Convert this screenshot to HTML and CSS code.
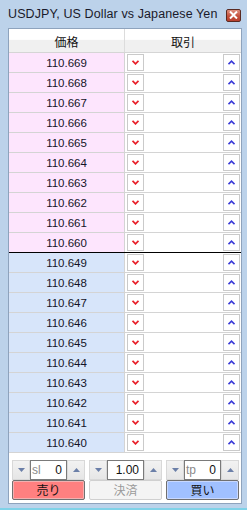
FILE: index.html
```html
<!DOCTYPE html>
<html>
<head>
<meta charset="utf-8">
<link rel="stylesheet" href="styles.css">
</head>
<body>
<div class="window">
  <div class="titlebar">
    <span class="title">USDJPY, US Dollar vs Japanese Yen</span>
    <span class="close"><svg width="9" height="8" viewBox="0 0 9 8"><path d="M1 0.5 L8 7.5 M8 0.5 L1 7.5" stroke="#fff" stroke-width="2"/></svg></span>
  </div>
  <div class="panel">
    <div class="head">
      <div class="hcell">価格</div>
      <div class="hcell">取引</div>
    </div>
    <div class="rows" id="rows"></div>
    <div class="spacer"></div>
    <div class="spins">
      <div class="spin">
        <span class="sbtn"><svg width="7" height="4" viewBox="0 0 7 4"><path d="M0 0H7L3.5 4Z" fill="#6b7fa8"/></svg></span>
        <span class="sinput"><span class="ph">sl</span><span class="val">0</span></span>
        <span class="sbtn"><svg width="7" height="4" viewBox="0 0 7 4"><path d="M0 4H7L3.5 0Z" fill="#6b7fa8"/></svg></span>
      </div>
      <div class="spin">
        <span class="sbtn"><svg width="7" height="4" viewBox="0 0 7 4"><path d="M0 0H7L3.5 4Z" fill="#6b7fa8"/></svg></span>
        <span class="sinput"><span class="ph"></span><span class="val">1.00</span></span>
        <span class="sbtn"><svg width="7" height="4" viewBox="0 0 7 4"><path d="M0 4H7L3.5 0Z" fill="#6b7fa8"/></svg></span>
      </div>
      <div class="spin">
        <span class="sbtn"><svg width="7" height="4" viewBox="0 0 7 4"><path d="M0 0H7L3.5 4Z" fill="#6b7fa8"/></svg></span>
        <span class="sinput"><span class="ph">tp</span><span class="val">0</span></span>
        <span class="sbtn"><svg width="7" height="4" viewBox="0 0 7 4"><path d="M0 4H7L3.5 0Z" fill="#6b7fa8"/></svg></span>
      </div>
    </div>
    <div class="actions">
      <button class="act sell">売り</button>
      <button class="act close-pos">決済</button>
      <button class="act buy">買い</button>
    </div>
  </div>
</div>
<script>
(function(){
  var prices = ["110.669","110.668","110.667","110.666","110.665","110.664","110.663","110.662","110.661","110.660",
                "110.649","110.648","110.647","110.646","110.645","110.644","110.643","110.642","110.641","110.640"];
  var down = '<svg width="7" height="5" viewBox="0 0 7 5"><path d="M0.5 0.8 L3.5 3.8 L6.5 0.8" fill="none" stroke="#e8202a" stroke-width="1.8"/></svg>';
  var up = '<svg width="7" height="5" viewBox="0 0 7 5"><path d="M0.5 4.2 L3.5 1.2 L6.5 4.2" fill="none" stroke="#3a3ad8" stroke-width="1.6"/></svg>';
  var html = '';
  prices.forEach(function(p, i){
    var cls = i < 10 ? 'ask' : 'bid';
    if (i === 9) cls += ' divider';
    html += '<div class="row ' + cls + '"><div class="price">' + p + '</div><div class="trade"><span class="arr">' + down + '</span><span class="arr">' + up + '</span></div></div>';
  });
  document.getElementById('rows').innerHTML = html;
})();
</script>
</body>
</html>
```

FILE: styles.css
```css
html, body {
  margin: 0;
  padding: 0;
}
body {
  width: 247px;
  height: 510px;
  background: #bcd2ea;
  font-family: Tahoma, "DejaVu Sans", "Liberation Sans", "Noto Sans CJK JP", sans-serif;
  overflow: hidden;
}
.window {
  width: 247px;
  height: 510px;
  box-sizing: border-box;
  border-bottom: 2px solid #7fd2e8;
  display: flex;
  flex-direction: column;
}
.titlebar {
  height: 28px;
  display: flex;
  align-items: center;
  justify-content: space-between;
  padding: 0 6px 1px 8px;
  box-sizing: border-box;
}
.title {
  font-family: "Liberation Sans", sans-serif;
  font-size: 12.5px;
  color: #1a1a2a;
  letter-spacing: 0.1px;
}
.close {
  width: 15px;
  height: 13px;
  box-sizing: border-box;
  border: 1px solid #5a2a22;
  border-radius: 2px;
  background: linear-gradient(#e0907f, #c4503c 55%, #b8402e);
  display: flex;
  align-items: center;
  justify-content: center;
  margin-top: 3px;
}
.panel {
  margin: 0 5px 0 8px;
  border: 1px solid #8ea3bd;
  background: #fff;
  height: 476px;
  box-sizing: border-box;
  display: flex;
  flex-direction: column;
}
.head {
  display: grid;
  grid-template-columns: 116px 1fr;
  height: 23px;
  background: linear-gradient(#ffffff, #ffffff 45%, #f0f0f0 50%, #f0f0f0);
  border-bottom: 1px solid #d5d5d5;
}
.hcell {
  display: flex;
  align-items: center;
  justify-content: center;
  font-family: "Noto Sans CJK JP", sans-serif;
  font-size: 12px;
  color: #111;
  padding-top: 2px;
}
.hcell:first-child {
  border-right: 1px solid #dcdcdc;
}
.row {
  display: grid;
  grid-template-columns: 116px 1fr;
  height: 20px;
  box-sizing: border-box;
  border-bottom: 1px solid #d4d4d4;
}
.row.divider {
  border-bottom: 1px solid #000;
}
.price {
  display: flex;
  align-items: center;
  justify-content: center;
  font-family: "Liberation Sans", sans-serif;
  font-size: 11.5px;
  color: #141428;
  border-right: 1px solid #d4d4d4;
}
.ask .price { background: #fde5fd; }
.bid .price { background: #d7e5fa; }
.trade {
  display: flex;
  justify-content: space-between;
  align-items: center;
  padding: 0 1px 0 2px;
  background: #fff;
}
.arr {
  width: 17px;
  height: 17px;
  box-sizing: border-box;
  border: 1px solid #cacaca;
  display: flex;
  align-items: center;
  justify-content: center;
}
.spacer {
  flex: 1;
}
.spins {
  display: flex;
  gap: 4px;
  padding: 0 2px 0 3px;
  height: 20px;
}
.spin {
  display: flex;
  flex: 1;
  height: 20px;
}
.sbtn {
  width: 18px;
  flex: none;
  box-sizing: border-box;
  border: 1px solid #d8d8d8;
  background: linear-gradient(#f2f2f2, #e6e6e6);
  display: flex;
  align-items: center;
  justify-content: center;
}
.sinput {
  flex: 1;
  box-sizing: border-box;
  border: 1px solid #7a7a7a;
  background: #fff;
  display: flex;
  align-items: center;
  justify-content: space-between;
  padding: 0 4px 0 1px;
  font-family: "Liberation Sans", sans-serif;
  font-size: 12px;
}
.ph { color: #8a8a8a; }
.val { color: #111; }
.actions {
  display: flex;
  gap: 4px;
  padding: 0 2px 0 3px;
  height: 20px;
  margin-bottom: 3px;
}
.act {
  flex: 1;
  margin: 0;
  padding: 0;
  border-radius: 2px;
  font-family: "Noto Sans CJK JP", sans-serif;
  font-size: 12px;
  line-height: 16px;
  box-sizing: border-box;
}
.sell {
  background: #ff8080;
  border: 1px solid #707070;
  box-shadow: inset 0 0 0 1px #f2b0b0;
  color: #111;
}
.close-pos {
  background: #f4f4f4;
  border: 1px solid #d0d0d0;
  color: #9a9a9a;
}
.buy {
  background: #a0c0ff;
  border: 1px solid #707070;
  box-shadow: inset 0 0 0 1px #c8d8ff;
  color: #111;
}
```
